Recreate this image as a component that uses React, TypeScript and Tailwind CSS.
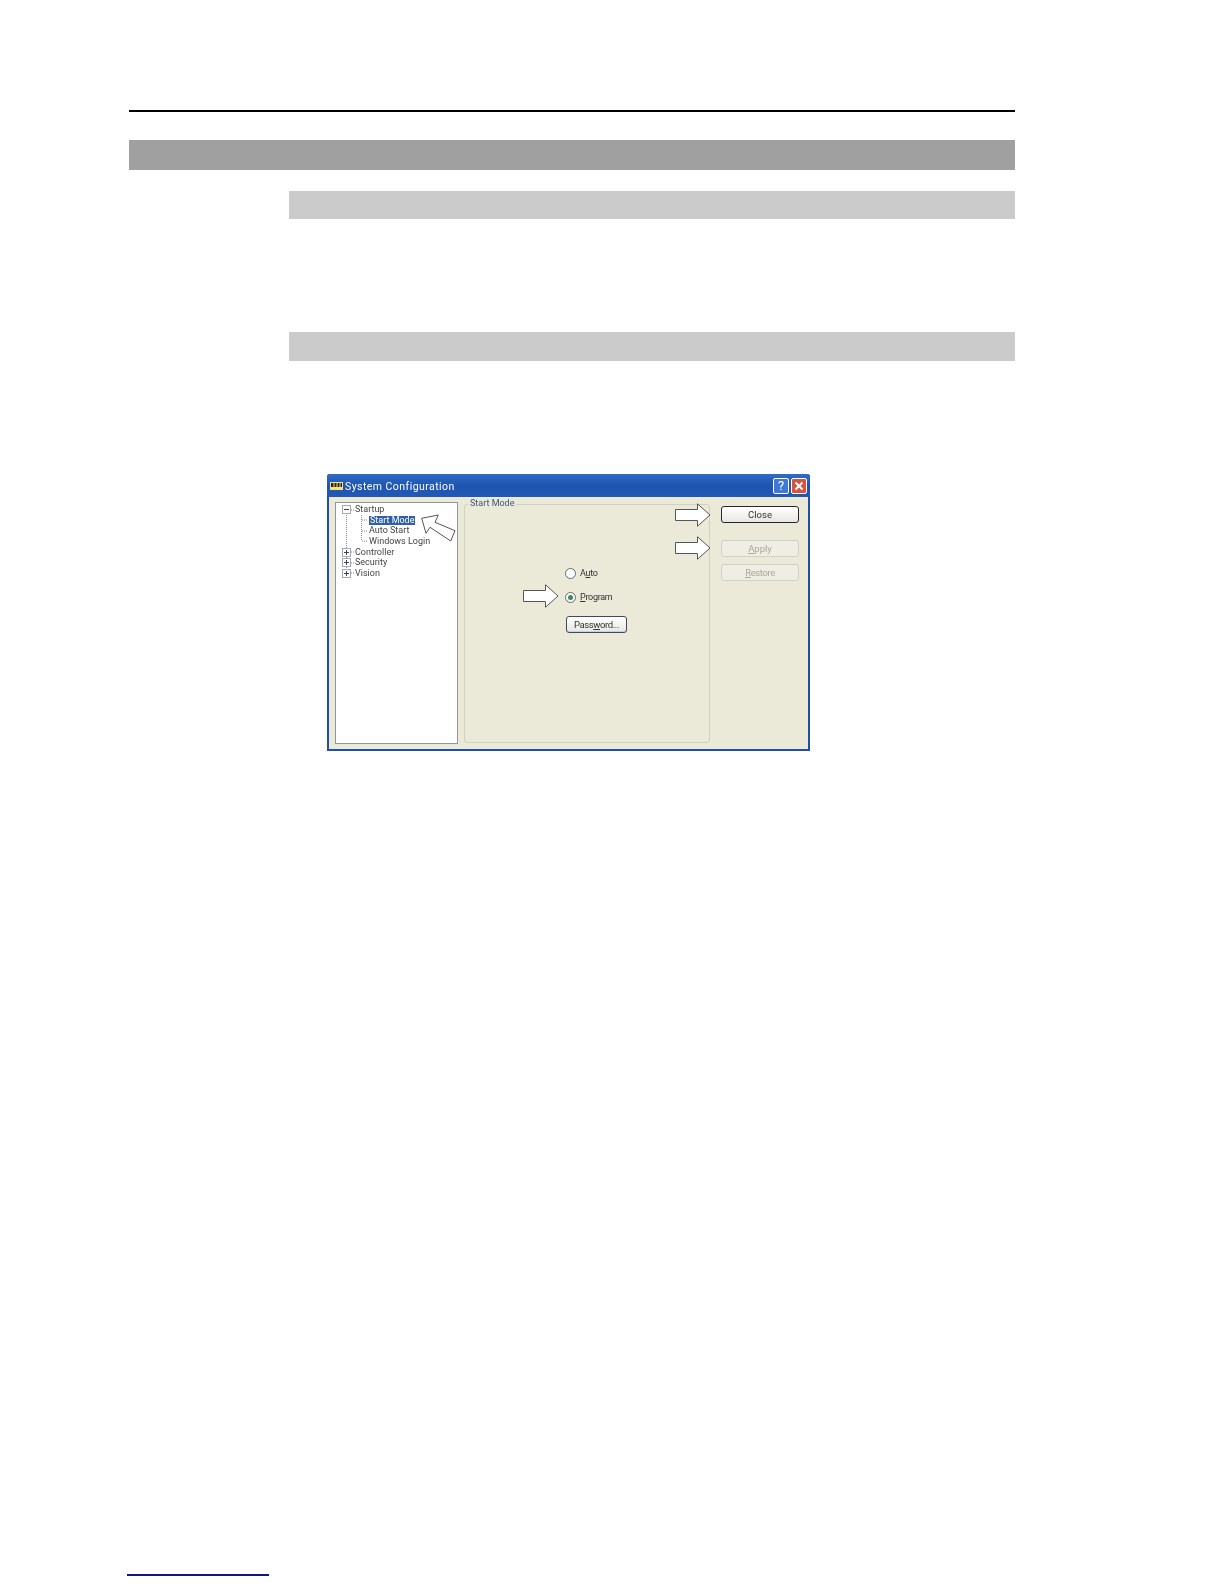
const TREE_ROWS = [
  { label: "Startup", sign: "minus", depth: 0 },
  { label: "Start Mode", depth: 1, selected: true },
  { label: "Auto Start", depth: 1 },
  { label: "Windows Login", depth: 1 },
  { label: "Controller", sign: "plus", depth: 0 },
  { label: "Security", sign: "plus", depth: 0 },
  { label: "Vision", sign: "plus", depth: 0 },
];

function BlockArrow({ className }: { className: string }) {
  return (
    <svg viewBox="0 0 36 24" className={className}>
      <path d="M0.5 6.5H22.5V0.8L35 12L22.5 23.2V17.5H0.5Z" fill="#fff" stroke="#555" strokeWidth="1" />
    </svg>
  );
}

function Expander({ sign }: { sign: string }) {
  return (
    <svg viewBox="0 0 9 9" className="w-[9px] h-[9px]">
      <rect x="0.5" y="0.5" width="8" height="8" fill="#fff" stroke="#a4a9b2" />
      <path d={sign === "plus" ? "M2 4.5H7M4.5 2V7" : "M2 4.5H7"} stroke="#444" />
    </svg>
  );
}

// label is split so only the access key gets underlined
function DlgButton({ before = "", hot = "", after = "", disabled, focused, className }: { before?: string; hot?: string; after?: string; disabled?: boolean; focused?: boolean; className: string }) {
  return (
    <div
      className={`flex items-center justify-center rounded-[3px] border text-[9.5px] leading-none ${className} ${
        disabled
          ? "border-[#d3d1c2] bg-[#efeee4] text-[#a9a89a]"
          : focused
          ? "border-[#23262e] bg-gradient-to-b from-white to-[#e8e8e0] text-[#333]"
          : "border-[#3c4a62] bg-gradient-to-b from-white to-[#e8e8e0] text-[#333]"
      }`}
    >
      {before}
      <span className="underline decoration-[0.5px] underline-offset-1">{hot}</span>
      {after}
    </div>
  );
}

function Radio({ before = "", hot, after, checked }: { before?: string; hot: string; after: string; checked?: boolean }) {
  return (
    <div className="flex items-center gap-[4px] h-[12px] text-[9px] tracking-[-0.3px] leading-none text-[#333]">
      <div className="flex items-center justify-center w-[11px] h-[11px] rounded-full border border-[#5c6a76] bg-white">
        {checked && <div className="w-[5px] h-[5px] rounded-full bg-[#3c8c50]" />}
      </div>
      <span>
        {before}
        <span className="underline decoration-[0.5px] underline-offset-1">{hot}</span>
        {after}
      </span>
    </div>
  );
}

export default function App() {
  return (
    <div className="w-[1224px] h-[1584px] bg-white flex flex-col font-['Roboto','Liberation_Sans',sans-serif]">
      <div className="ml-[129px] w-[886px] mt-[110px] h-[2px] bg-black" />
      <div className="ml-[129px] w-[886px] mt-[28px] h-[30px] bg-[#a0a0a0]" />
      <div className="ml-[289px] w-[726px] mt-[21px] h-[28px] bg-[#cbcbcb]" />
      <div className="ml-[289px] w-[726px] mt-[113px] h-[29px] bg-[#cbcbcb]" />

      {/* dialog */}
      <div className="relative ml-[327px] mt-[113px] w-[483px] h-[277px] flex flex-col rounded-t-[3px] border-x-2 border-b-2 border-[#1f50a8] bg-[#ebe9d8] blur-[0.4px]">
        <div className="flex items-center h-[23px] -mx-[2px] px-[3px] bg-gradient-to-b from-[#2f6cc8] via-[#1f55b0] to-[#2259b4] rounded-t-[3px]">
          <svg viewBox="0 0 13 8" className="w-[13px] h-[8px]">
            <rect width="13" height="8" fill="#f4e27a" />
            <rect x="1" y="1" width="11" height="4" fill="#222" />
            <path d="M4 1V5M7 1V5M10 1V5" stroke="#f4e27a" />
          </svg>
          <span className="ml-[2px] mt-[2px] text-[10.5px] tracking-[0.45px] text-white">System Configuration</span>
          <div className="ml-auto flex gap-[2px]">
            <div className="w-[16px] h-[16px] rounded-[2px] border border-white bg-[#3f78d8] flex items-center justify-center text-[13px] leading-none text-white">?</div>
            <div className="w-[16px] h-[16px] rounded-[2px] border border-white bg-[#d8543a] flex items-center justify-center">
              <svg viewBox="0 0 10 10" className="w-[10px] h-[10px]">
                <path d="M1.5 1.5L8.5 8.5M8.5 1.5L1.5 8.5" stroke="#fff" strokeWidth="2" />
              </svg>
            </div>
          </div>
        </div>

        <div className="flex flex-1 pl-[6px] pr-[8px] pt-[5px] pb-[4px]">
          {/* tree */}
          <div className="relative w-[123px] h-[242px] border border-[#8f97a3] bg-white pt-[1.5px]">
            <svg className="absolute left-0 top-0 w-[60px] h-[90px]">
              <path d="M10.5 12V74M25.5 12V38M26 17H32M26 28H32M26 38H32M11 7H18M11 49H18M11 60H18M11 70H18" stroke="#8a8a8a" strokeDasharray="1 1" fill="none" />
            </svg>
            {TREE_ROWS.map((row) => (
              <div key={row.label} className={`relative flex items-center h-[10.6px] text-[9px] leading-none text-[#444] ${row.depth ? "pl-[33px]" : "pl-[6px]"}`}>
                {row.sign && <Expander sign={row.sign} />}
                <span className={`${row.depth ? "" : "ml-[4px]"} ${row.selected ? "bg-[#2f5fa8] text-white px-px" : "bg-white"}`}>{row.label}</span>
              </div>
            ))}
          </div>

          {/* group box */}
          <div className="relative ml-[6px] mt-[2px] w-[246px] h-[239px] rounded-[3px] border border-[#d2d0bf] flex flex-col items-start pl-[100px] pt-[62px]">
            <span className="absolute -top-[6px] left-[3px] px-[2px] bg-[#ebe9d8] text-[9px] leading-none text-[#3f5580]">Start Mode</span>
            <Radio before="A" hot="u" after="to" />
            <div className="mt-[12px]">
              <Radio hot="P" after="rogram" checked />
            </div>
            <DlgButton before="Pass" hot="w" after="ord..." className="mt-[13px] ml-[1px] w-[61px] h-[17px] tracking-[-0.4px] shadow-[inset_0_-1px_0_#c8d0e0]" />
            <BlockArrow className="absolute left-[58px] top-[79px] w-[36px] h-[24px]" />
            <BlockArrow className="absolute left-[210px] -top-[2px] w-[36px] h-[24px]" />
            <BlockArrow className="absolute left-[210px] top-[31px] w-[36px] h-[24px]" />
          </div>

          {/* buttons */}
          <div className="ml-[11px] flex flex-col">
            <DlgButton before="Close" focused className="mt-[4px] w-[78px] h-[17px] border-[1.5px]" />
            <DlgButton hot="A" after="pply" disabled className="mt-[17px] w-[78px] h-[17px]" />
            <DlgButton hot="R" after="estore" disabled className="mt-[7px] w-[78px] h-[17px] tracking-[-0.4px]" />
          </div>
        </div>

        {/* arrow pointing at tree selection */}
        <svg viewBox="0 0 36 30" className="absolute left-[92px] top-[40px] w-[36px] h-[30px]">
          <path d="M0.7 4.3L17.3 1L14 8.3L34 16.7L29.7 27L9 13.3L5 19.3Z" fill="#fff" stroke="#555" />
        </svg>
      </div>

      <div className="mt-auto mb-[8px] ml-[127px] w-[142px] h-[2px] bg-[#14148a]" />
    </div>
  );
}
